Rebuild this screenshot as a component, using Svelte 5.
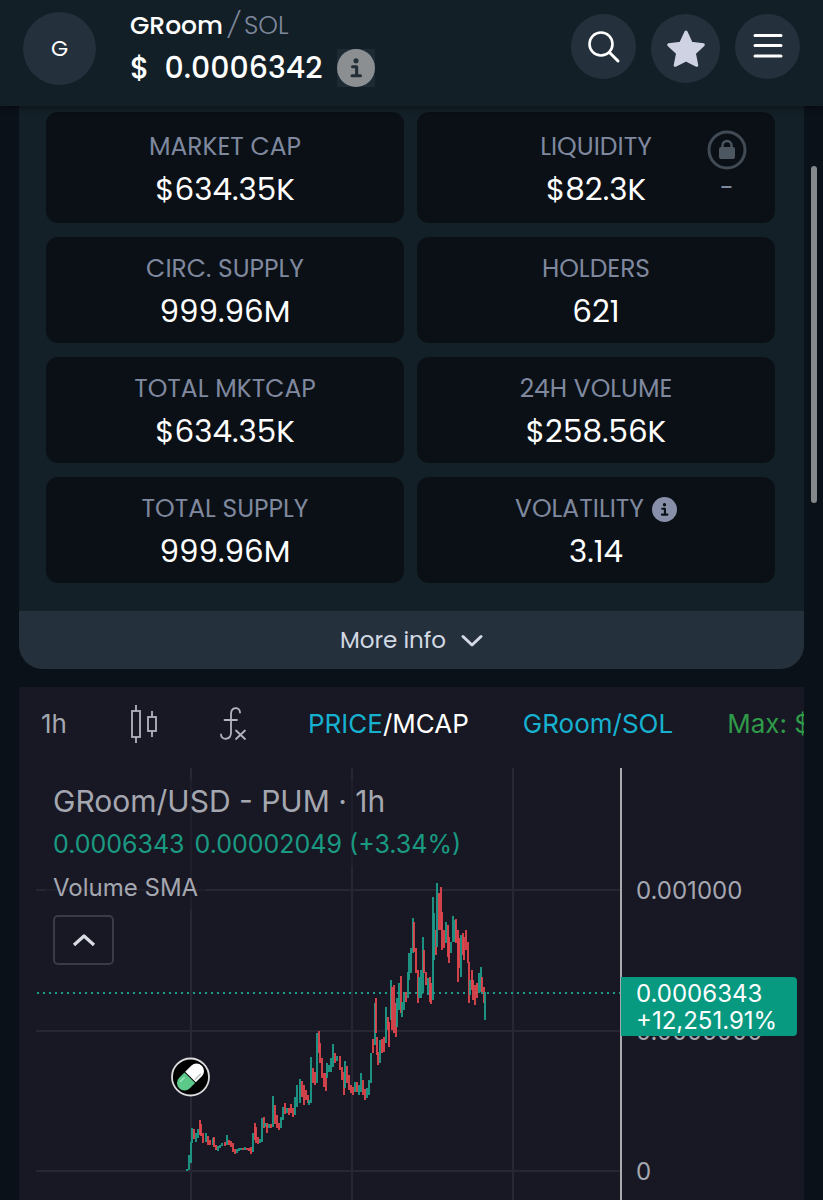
<script>
  const stats = [
    { label: "MARKET CAP", value: "$634.35K" },
    { label: "LIQUIDITY", value: "$82.3K", lock: true },
    { label: "CIRC. SUPPLY", value: "999.96M" },
    { label: "HOLDERS", value: "621" },
    { label: "TOTAL MKTCAP", value: "$634.35K" },
    { label: "24H VOLUME", value: "$258.56K" },
    { label: "TOTAL SUPPLY", value: "999.96M" },
    { label: "VOLATILITY", value: "3.14", info: true },
  ];

  // plot space is 584 x 432, prices on the right axis
  const plotHeight = 432;
  const gridX = [155, 316, 477];
  const ticks = [
    { y: 122, text: "0.001000" },
    { y: 263, text: "0.0005000" },
    { y: 403, text: "0" },
  ];

  // x, high, low, direction
  const raw = `151 401 403 g,153 387 402 g,155 374 395 g,156 360 375 g,158 361 371 r,160 365 374 g,162 361 370 g,164 352 367 r,165 356 368 r,167 365 375 r,170 365 374 g,172 368 377 r,174 372 377 r,177 370 377 g,178 369 379 r,180 377 382 r,182 378 383 g,184 377 380 g,186 375 378 g,189 374 378 r,191 367 377 g,193 372 377 r,195 373 379 r,197 375 384 r,199 381 386 r,201 381 385 g,203 380 383 g,205 380 382 g,207 380 382 r,209 379 382 g,211 380 382 r,213 380 383 r,215 379 386 r,217 365 384 g,219 355 372 r,220 359 375 r,222 369 376 r,224 371 375 g,226 350 374 g,228 349 360 r,229 355 359 g,231 355 365 r,233 356 360 g,235 356 360 r,237 328 359 g,239 337 356 r,241 347 360 r,243 355 362 r,245 349 360 g,247 339 352 g,249 335 346 r,251 340 345 g,253 340 347 r,255 336 345 r,257 340 349 r,259 329 347 g,261 317 339 g,264 311 335 g,266 313 329 r,268 317 337 r,270 322 332 r,272 327 335 r,273 332 337 g,275 289 335 g,277 300 315 r,279 304 317 r,281 265 315 g,283 263 285 r,284 275 295 r,286 290 310 r,288 305 319 r,290 305 323 r,291 295 310 g,293 297 304 g,295 290 304 g,297 276 299 g,299 285 295 r,301 288 293 g,304 288 302 r,306 299 312 r,308 304 327 r,309 293 320 g,311 298 315 r,313 307 322 r,315 317 325 r,317 319 327 r,319 314 324 g,321 314 324 r,323 317 327 g,325 305 324 g,327 312 327 r,329 321 332 r,331 320 330 g,333 312 327 g,335 285 315 g,337 271 285 r,339 235 277 g,340 230 265 r,341 269 287 r,342 284 297 r,344 272 295 g,346 271 285 r,348 269 284 r,350 239 275 g,352 249 262 r,353 254 279 r,355 212 252 g,356 219 262 r,358 217 265 r,360 235 269 r,361 230 259 g,363 215 242 g,365 208 245 r,366 234 249 g,368 225 242 g,370 224 234 r,372 204 230 g,373 185 212 g,375 180 205 g,377 150 185 g,378 154 184 r,380 180 205 r,382 202 235 r,383 209 230 g,385 202 230 g,387 169 225 g,388 182 205 r,390 204 217 r,392 210 227 g,394 209 234 r,395 215 236 r,397 129 232 g,398 145 192 g,400 162 187 r,401 115 179 g,403 125 162 r,405 119 162 r,406 144 182 r,408 162 180 r,410 154 175 g,412 157 189 r,413 169 195 r,415 174 185 g,417 148 174 g,419 152 174 g,420 151 175 r,422 162 214 r,423 170 200 r,425 167 209 g,427 165 187 r,428 169 192 r,430 162 182 r,432 174 195 r,433 194 235 r,434 212 227 g,436 202 222 r,437 212 232 r,439 217 237 r,441 215 230 r,443 205 225 g,445 199 224 g,446 209 224 r,448 219 235 r,449 224 252 g`;
  const candles = raw.split(",").map((c) => {
    const [x, high, low, dir] = c.split(" ");
    return { x: +x, high: +high, low: +low, up: dir === "g" };
  });
</script>

{#snippet infoIcon(fill, mark)}
  <svg class="info" viewBox="0 0 24 24" aria-hidden="true">
    <circle cx="12" cy="12" r="12" {fill} />
    <circle cx="12" cy="7.4" r="1.6" fill={mark} />
    <path
      d="M9.8 11.2H12.4V16.8M9.5 16.9H14.8"
      fill="none"
      stroke={mark}
      stroke-width="2"
      stroke-linecap="round"
      stroke-linejoin="round"
    />
  </svg>
{/snippet}

<header>
  <div class="avatar">G</div>
  <div class="token">
    <div class="pair"><strong>GRoom</strong><i>/</i><span>SOL</span></div>
    <div class="price">
      <span>$</span>
      <span>0.0006342</span>
      <button class="price-info" aria-label="Price info">
        {@render infoIcon("#8b8f91", "#232f38")}
      </button>
    </div>
  </div>
  <nav>
    <button class="round" aria-label="Search">
      <svg width="34" height="34" viewBox="0 0 34 34" fill="none">
        <circle cx="14" cy="14" r="11.5" stroke="#fff" stroke-width="2.6" />
        <path d="M22.5 22.5L31 31" stroke="#fff" stroke-width="3" stroke-linecap="round" />
      </svg>
    </button>
    <button class="round star" aria-label="Favorite">
      <svg width="40" height="40" viewBox="0 0 40 40">
        <path
          d="M20 3L25.2 14.2L37.3 15.8L28.4 24.2L30.8 36.3L20 30.8L9.2 36.3L11.6 24.2L2.7 15.8L14.8 14.2Z"
          fill="#cfd2e2"
          stroke="#cfd2e2"
          stroke-width="3"
          stroke-linejoin="round"
        />
      </svg>
    </button>
    <button class="round" aria-label="Menu">
      <svg width="30" height="28" viewBox="0 0 30 28">
        <path
          d="M2 2.5H28M2 12.5H28M2 23H28"
          stroke="#fff"
          stroke-width="3"
          stroke-linecap="round"
        />
      </svg>
    </button>
  </nav>
</header>

<main>
  <section class="panel">
    <div class="stats">
      {#each stats as stat}
        <div class="card">
          <div class="label">
            {stat.label}
            {#if stat.info}{@render infoIcon("#8790a8", "#0a1016")}{/if}
          </div>
          <div class="value">{stat.value}</div>
          {#if stat.lock}
            <div class="lock">
              <svg width="40" height="40" viewBox="0 0 40 40" fill="none">
                <circle cx="20" cy="20" r="18" stroke="#424b55" stroke-width="3" />
                <rect x="12" y="17" width="16" height="12" rx="2" fill="#4d5762" />
                <path d="M15.5 18V15.5a4.5 4.5 0 0 1 9 0V18" stroke="#4d5762" stroke-width="2.4" />
              </svg>
              <span>-</span>
            </div>
          {/if}
        </div>
      {/each}
    </div>
    <button class="more">
      More info
      <svg width="22" height="14" viewBox="0 0 22 14" fill="none">
        <path
          d="M2 3.5L11 12L20 3.5"
          stroke="#d3d9e4"
          stroke-width="3"
          stroke-linecap="round"
          stroke-linejoin="round"
        />
      </svg>
    </button>
  </section>

  <section class="chart">
    <div class="toolbar">
      <button class="tool">1h</button>
      <button class="tool" aria-label="Candles">
        <svg width="28" height="40" viewBox="0 0 28 40" fill="none" stroke="#b2b5be" stroke-width="1.8">
          <rect x="2" y="7" width="8" height="26" />
          <path d="M6 1V7M6 33V39" />
          <rect x="18" y="13" width="8" height="14" />
          <path d="M22 7V13M22 27V33" />
        </svg>
      </button>
      <button class="tool" aria-label="Indicators">
        <svg
          width="28"
          height="36"
          viewBox="0 0 28 36"
          fill="none"
          stroke="#b2b5be"
          stroke-width="1.8"
          stroke-linecap="round"
        >
          <path
            d="M21 6.5C21 0.5 12 0.5 12 8V26.5C12 34.5 2 34.5 2 28.5M5.5 14H18M17 24.5L26 33M26 24.5L17 33"
          />
        </svg>
      </button>
      <button class="white"><span class="cyan">PRICE</span>/MCAP</button>
      <button class="cyan">GRoom/SOL</button>
      <button class="green">Max: $0.0008</button>
    </div>

    <div class="board">
      <div class="plot">
        <svg viewBox="0 0 584 {plotHeight}" fill="none">
          <g stroke="#262732" stroke-width="2">
            {#each gridX as x}
              <line x1={x} y1="0" x2={x} y2={plotHeight} />
            {/each}
            {#each ticks as tick}
              <line x1="0" y1={tick.y} x2="584" y2={tick.y} />
            {/each}
          </g>
          <line
            x1="1"
            y1="225"
            x2="584"
            y2="225"
            stroke="#1f9d8a"
            stroke-width="2"
            stroke-dasharray="2 4"
          />
          {#each candles as c}
            <line
              x1={c.x}
              y1={c.high}
              x2={c.x}
              y2={c.low}
              stroke={c.up ? "#1f9f8c" : "#e5484f"}
              stroke-width="1.8"
            />
          {/each}
          <g transform="translate(154.5 309)">
            <circle r="18.5" fill="#000" stroke="#dcdcdc" stroke-width="1.8" />
            <g transform="rotate(-45)">
              <path d="M0 -7.5H8.5a7.5 7.5 0 0 1 0 15H0Z" fill="#fff" />
              <path d="M-1 -7.5H-8.5a7.5 7.5 0 0 0 0 15H-1Z" fill="#5cc98b" />
              <path d="M2 5H9" stroke="#b9c4c0" stroke-width="1.5" stroke-linecap="round" />
              <path d="M-10 -4H-5" stroke="#9be8bb" stroke-width="1.5" stroke-linecap="round" />
            </g>
          </g>
        </svg>
        <div class="legend">
          <div class="row title">GRoom/USD - PUM · 1h</div>
          <div class="row change"><span>0.0006343</span><span>0.00002049 (+3.34%)</span></div>
          <div class="row">Volume SMA</div>
          <button aria-label="Collapse legend">
            <svg width="24" height="14" viewBox="0 0 24 14" fill="none">
              <path d="M2 12L12 3L22 12" stroke="#d9dbe3" stroke-width="3.2" stroke-linejoin="round" />
            </svg>
          </button>
        </div>
      </div>
      <div class="axis">
        {#each ticks as tick}
          <span class="tick" style="top: {(tick.y / plotHeight) * 100}%">{tick.text}</span>
        {/each}
        <div class="last">0.0006343<br />+12,251.91%</div>
      </div>
    </div>
  </section>
</main>

<div class="scrollbar"></div>

<style>
  :global(body) {
    background: #0a1118;
    color: #fff;
    font-family: Poppins, Inter, sans-serif;
    overflow-x: hidden;
  }
  button {
    border: 0;
    padding: 0;
    margin: 0;
    background: none;
    color: inherit;
    font: inherit;
    cursor: pointer;
  }
  svg {
    display: block;
    flex: none;
  }
  header {
    position: relative;
    z-index: 1;
    display: flex;
    align-items: flex-start;
    height: 106px;
    padding: 0 23px;
    box-sizing: border-box;
    background: #131f27;
    box-shadow: 0 2px 6px rgba(0, 0, 0, 0.4);
  }
  .avatar {
    display: flex;
    align-items: center;
    justify-content: center;
    width: 73px;
    height: 73px;
    margin-top: 12px;
    border-radius: 50%;
    background: #24303b;
    font-size: 22px;
  }
  .token {
    margin: 5px auto 0 34px;
  }
  .pair {
    display: flex;
    align-items: center;
    gap: 5px;
    font-size: 25px;
    line-height: 42px;
    font-weight: 300;
    color: #7f889c;
  }
  .pair strong {
    font-weight: 500;
    color: #fff;
  }
  .price {
    display: flex;
    align-items: center;
    gap: 15px;
    font-size: 30px;
    line-height: 42px;
    font-weight: 500;
  }
  .price-info {
    width: 38px;
    height: 38px;
    background: #1d2a33;
  }
  .price-info .info {
    width: 38px;
    height: 38px;
  }
  nav {
    display: flex;
    gap: 15px;
    margin-top: 14px;
  }
  .round {
    display: flex;
    align-items: center;
    justify-content: center;
    width: 65px;
    height: 65px;
    border-radius: 50%;
    background: #24303b;
  }
  .star {
    width: 69px;
    height: 69px;
  }

  main {
    padding: 0 19px;
  }
  .panel {
    border-radius: 0 0 24px 24px;
    background: #132027;
    overflow: hidden;
  }
  .stats {
    display: grid;
    grid-template-columns: 1fr 1fr;
    grid-template-rows: 111px;
    grid-auto-rows: 106px;
    gap: 14px 13px;
    padding: 6px 29px 28px 27px;
  }
  .card {
    position: relative;
    display: flex;
    flex-direction: column;
    align-items: center;
    justify-content: center;
    border-radius: 12px;
    background: #0a1016;
    line-height: 42px;
  }
  .label {
    display: flex;
    align-items: center;
    gap: 8px;
    font-size: 25px;
    color: #7f889e;
  }
  .label .info {
    width: 25px;
    height: 25px;
  }
  .value {
    font-size: 31px;
  }
  .lock {
    position: absolute;
    top: 18px;
    right: 28px;
    display: flex;
    flex-direction: column;
    align-items: center;
    font-size: 25px;
    line-height: 36px;
    color: #7f889e;
  }
  .more {
    display: flex;
    align-items: center;
    justify-content: center;
    gap: 15px;
    width: 100%;
    height: 58px;
    background: #24303b;
    color: #d3d9e4;
    font-size: 23px;
  }

  .chart {
    margin-top: 18px;
    background: #171824;
    font-family: Inter, sans-serif;
    color: #a5a7b0;
    overflow: hidden;
  }
  .toolbar {
    display: flex;
    align-items: center;
    gap: 54px;
    height: 81px;
    padding: 0 0 8px 22px;
    box-sizing: border-box;
    font-size: 26px;
    white-space: nowrap;
  }
  .toolbar button {
    flex: none;
  }
  .tool {
    min-width: 29px;
    margin-right: 6px;
    text-align: left;
  }
  .white {
    color: #fff;
  }
  .cyan {
    color: #17b1d0;
  }
  .green {
    color: #2f9a48;
  }
  .board {
    display: grid;
    grid-template-columns: 1fr 184px;
    padding-left: 17px;
  }
  .plot {
    position: relative;
  }
  .plot > svg {
    width: 100%;
  }
  .legend {
    position: absolute;
    top: 12px;
    left: 9px;
    line-height: 43px;
    font-size: 24px;
    white-space: nowrap;
  }
  .row {
    width: fit-content;
    padding: 0 8px;
    background: rgba(23, 24, 36, 0.5);
  }
  .title {
    font-size: 30px;
  }
  .change {
    display: flex;
    gap: 10px;
    font-size: 25px;
    color: #1b9a82;
  }
  .legend button {
    display: flex;
    align-items: center;
    justify-content: center;
    width: 61px;
    height: 50px;
    margin: 6px 0 0 8px;
    border: 2px solid #3a3b46;
    border-radius: 5px;
  }
  .axis {
    position: relative;
    border-left: 2px solid #a9aab0;
    font-size: 24px;
    line-height: 27px;
  }
  .tick {
    position: absolute;
    left: 14px;
    transform: translateY(-50%);
  }
  .last {
    position: absolute;
    top: 209px;
    left: -1px;
    right: 7px;
    padding: 3px 0 2px 15px;
    border-radius: 0 4px 4px 0;
    background: #089981;
    color: #fff;
  }

  .scrollbar {
    position: fixed;
    top: 166px;
    right: 6px;
    width: 6px;
    height: 337px;
    border-radius: 3px;
    background: #85888b;
  }
</style>
